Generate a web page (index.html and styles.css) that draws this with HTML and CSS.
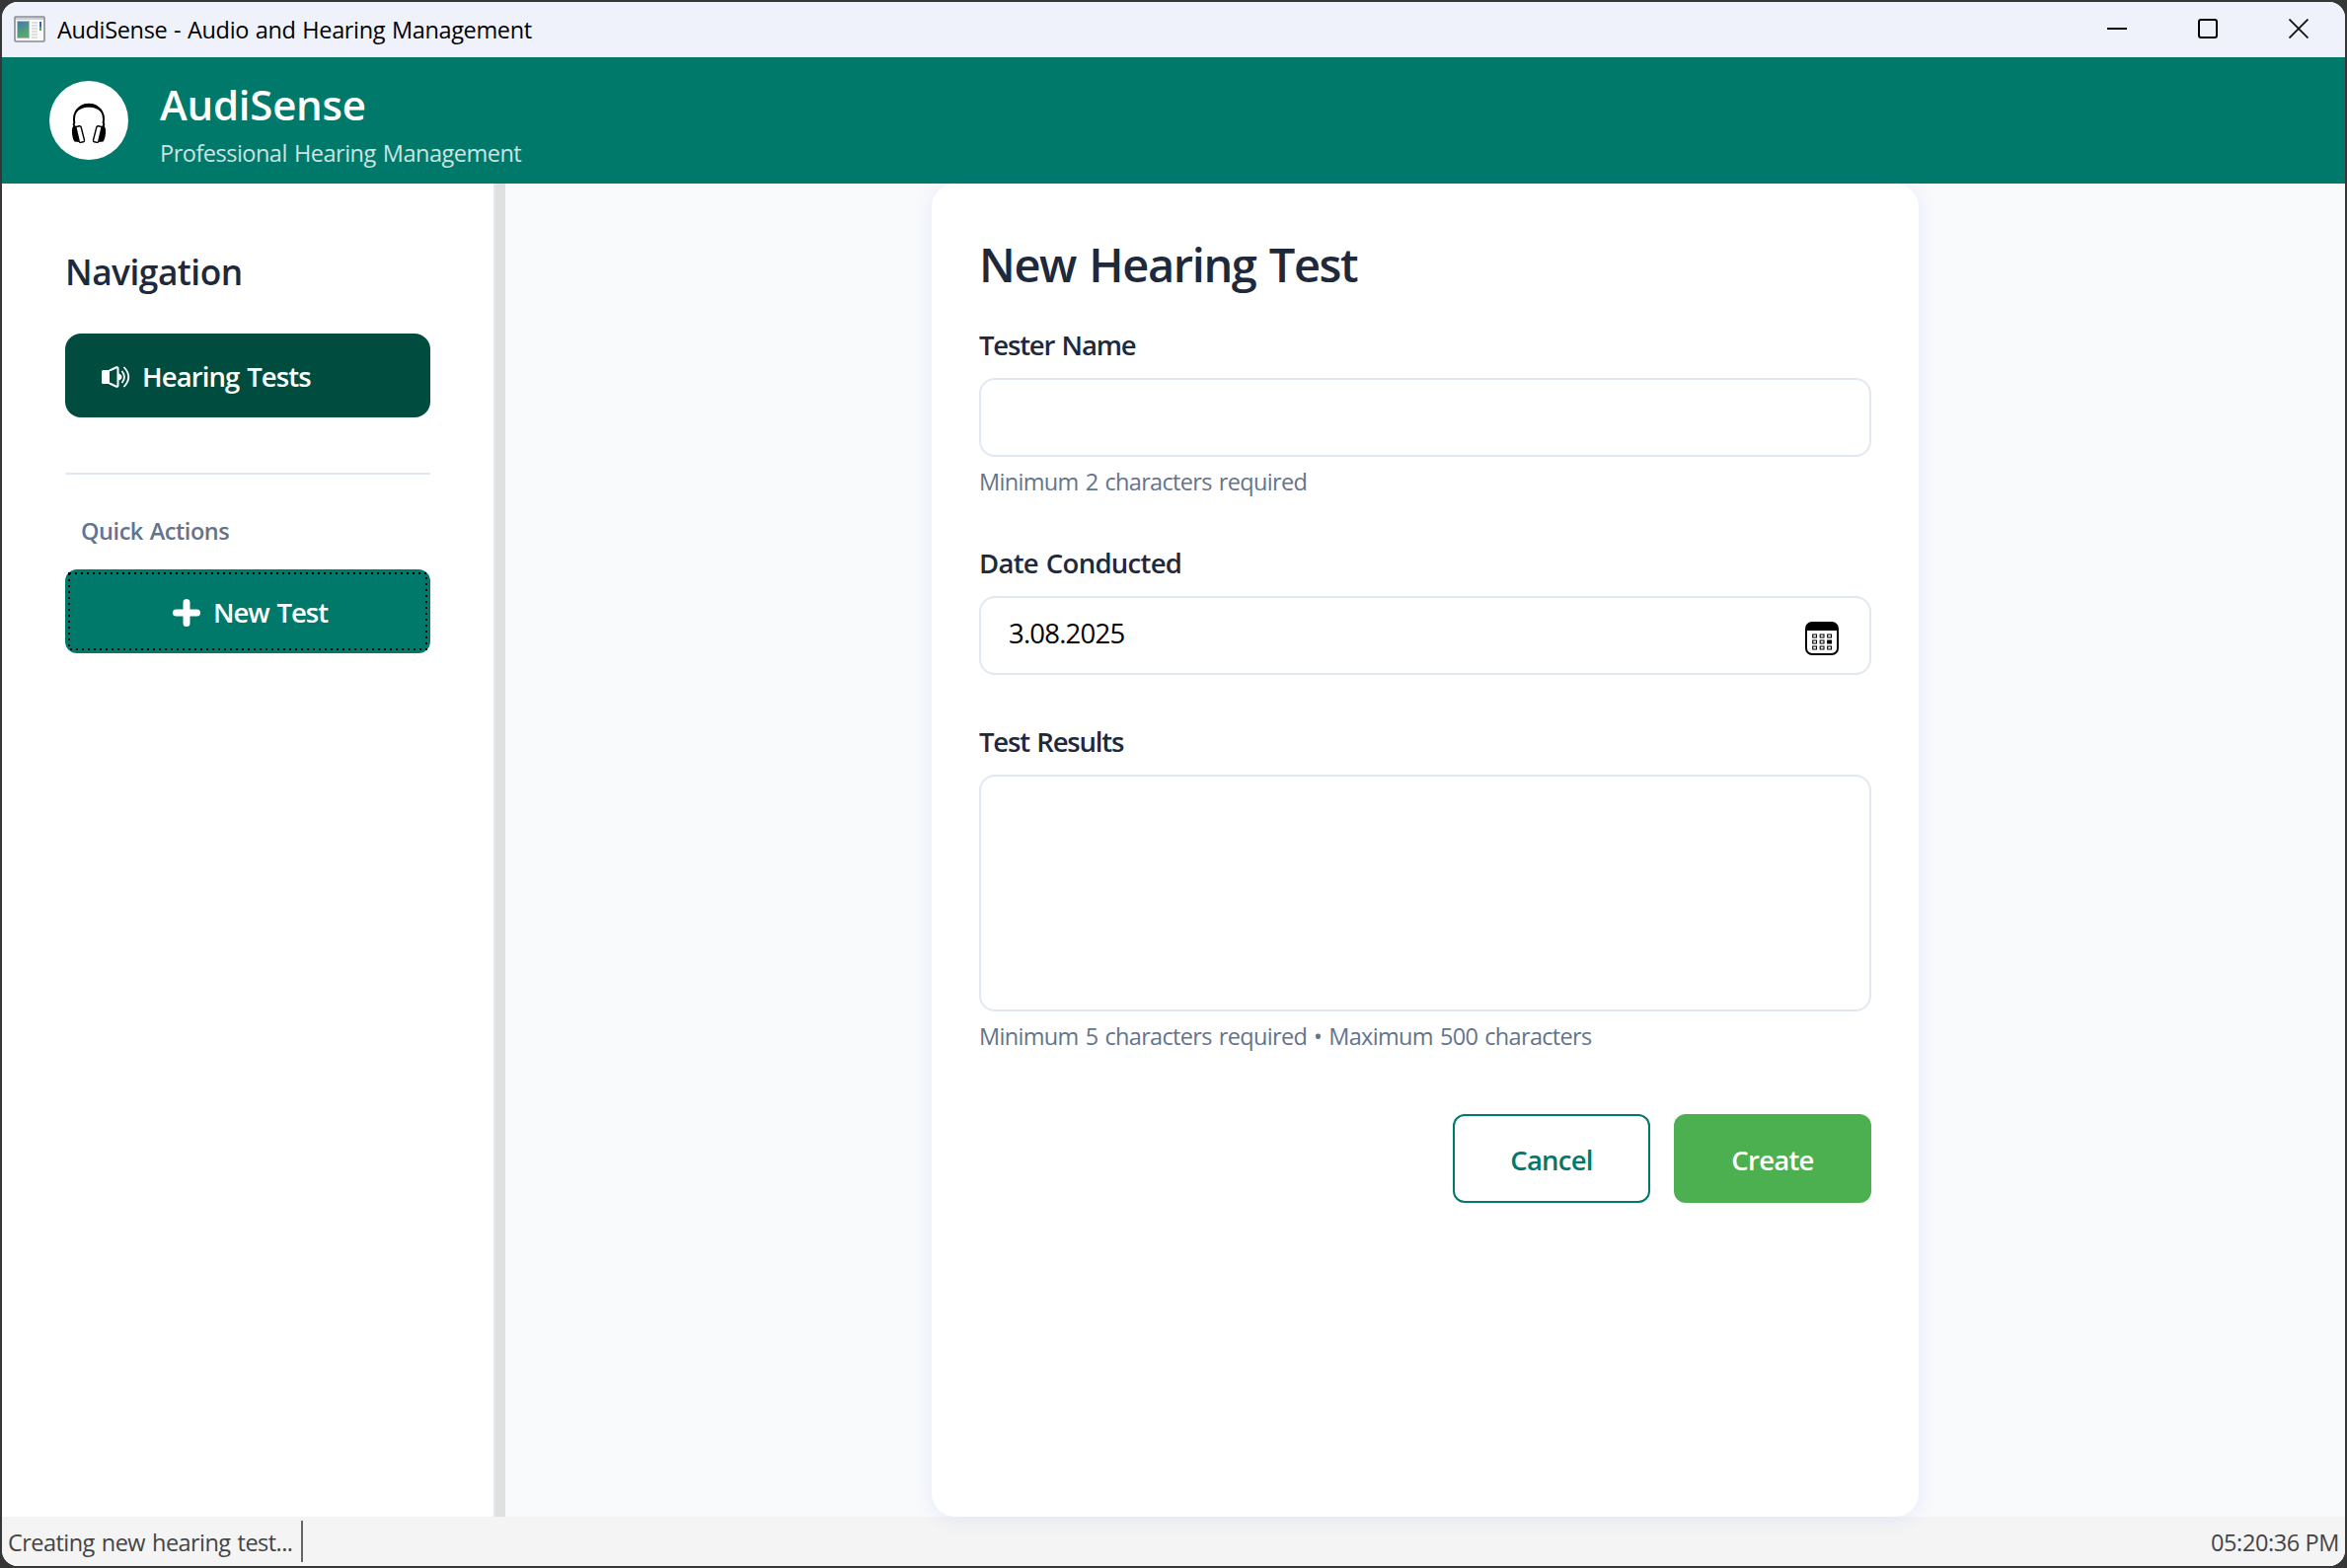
FILE: index.html
```html
<!DOCTYPE html>
<html lang="en">
<head>
<meta charset="utf-8">
<title>AudiSense - Audio and Hearing Management</title>
<link rel="stylesheet" href="styles.css">
</head>
<body>
<div class="window">
  <div class="titlebar">
    <svg class="app-icon" width="32" height="28" viewBox="0 0 32 28">
      <rect x="1" y="1" width="30" height="25" rx="1" fill="#fafafa" stroke="#868b91" stroke-width="1.6"/>
      <rect x="2" y="2" width="28" height="2" fill="#c9ced6"/>
      <rect x="3.5" y="5.5" width="12" height="17" fill="#fff" stroke="#b5bac0"/>
      <defs><linearGradient id="pane" x1="0" y1="0" x2="0.4" y2="1"><stop offset="0" stop-color="#4877ae"/><stop offset="1" stop-color="#55ad68"/></linearGradient></defs>
      <rect x="4" y="6" width="11" height="16" fill="url(#pane)"/>
      <path d="M18 7h6M18 10h6M18 13h6M18 16h6M18 19h6M18 22h6" stroke="#c4c4c4"/>
      <rect x="26" y="6" width="2" height="5" fill="#3c66a6"/><rect x="26" y="11" width="2" height="4" fill="#4fa35f"/>
    </svg>
    <span class="title-text">AudiSense - Audio and Hearing Management</span>
    <div class="controls">
      <svg width="20" height="20" viewBox="0 0 20 20"><path d="M0 10h20" stroke="#000" stroke-width="2"/></svg>
      <svg width="20" height="20" viewBox="0 0 20 20"><rect x="1" y="1" width="18" height="18" rx="2" fill="none" stroke="#000" stroke-width="2"/></svg>
      <svg width="20" height="20" viewBox="0 0 20 20"><path d="M.5 .5l19 19M19.5 .5l-19 19" stroke="#111" stroke-width="1.8"/></svg>
    </div>
  </div>
  <header class="header">
    <div class="logo">
      <svg width="36" height="42" viewBox="0 0 36 42">
        <path d="M4 24Q1.800 22.500 3.300 20.500C1.500 9 8 2.200 18 2.200S34.500 9 32.700 20.500Q34.200 22.500 32 24" fill="none" stroke="#000" stroke-width="2"/>
        <path d="M4.500 11C7 3.500 12 .8 18 .8S29 3.500 31.500 11C28 6.500 23.500 4.800 18 4.800S8 6.500 4.500 11Z"/>
        <path d="M3 23Q.5 25 1 31T3.500 39.500L8 40L5 24Z"/>
        <path d="M33 23Q35.500 25 35 31T32.500 39.500L28 40L31 24Z"/>
        <path d="M5 25.500Q4.800 24.600 6 24.300L8.500 23.800Q9.800 23.600 10.200 25L13.500 38Q13.800 39.400 12.500 39.800L9.500 40.400Q8.600 40.500 8.200 39.200Z" fill="#fff" stroke="#000" stroke-width="1.400"/>
        <path d="M31 25.500Q31.200 24.600 30 24.300L27.500 23.800Q26.200 23.600 25.800 25L22.500 38Q22.200 39.400 23.500 39.800L26.500 40.400Q27.400 40.500 27.800 39.200Z" fill="#fff" stroke="#000" stroke-width="1.400"/>
      </svg>
    </div>
    <div class="brand">
      <span class="brand-name">AudiSense</span>
      <span class="brand-sub">Professional Hearing Management</span>
    </div>
  </header>
  <div class="body">
    <aside class="sidebar">
      <h2 class="nav-title">Navigation</h2>
      <button class="nav-button">
        <svg width="30" height="24" viewBox="0 0 30 24">
          <path d="M1.500 5H8v14H1.500Q0 19 0 17.500V6.500Q0 5 1.500 5Z" fill="#fff"/>
          <path d="M8 5.500L15 2.300Q16.500 1.800 16.500 3.300V20.700Q16.500 22.200 15 21.700L8 18.500" fill="none" stroke="#fff" stroke-width="2"/>
          <path d="M17 8.500Q20.500 9.500 20.500 12T17 15.500Z" fill="#fff"/>
          <path d="M20.500 6Q25.500 12 20.500 18M22.500 2Q32 12 22.500 22" fill="none" stroke="#fff" stroke-width="1.800"/>
        </svg>
        <span>Hearing Tests</span>
      </button>
      <div class="divider"></div>
      <h3 class="quick-title">Quick Actions</h3>
      <button class="new-button">
        <svg class="focus" width="364" height="79"><rect x="1" y="1" width="362" height="77" fill="none" stroke="#000" stroke-width="2" stroke-dasharray="2 4"/></svg>
        <svg width="28" height="28" viewBox="0 0 28 28"><path d="M14 3.500v21M3.500 14h21" stroke="#fff" stroke-width="7" stroke-linecap="round"/></svg>
        <span>New Test</span>
      </button>
    </aside>
    <div class="splitter"></div>
    <main class="content">
      <form class="card">
        <h1 class="card-title">New Hearing Test</h1>
        <label class="label tester-label">Tester Name</label>
        <div class="field"></div>
        <p class="hint">Minimum 2 characters required</p>
        <label class="label">Date Conducted</label>
        <div class="field date">
          <span>3.08.2025</span>
          <svg width="34" height="34" viewBox="0 0 34 34">
            <rect x="1" y="1" width="32" height="32" rx="6" fill="#fff" stroke="#000" stroke-width="2"/>
            <path d="M1 9V7q0-6 6-6h20q6 0 6 6v2Z"/>
            <g fill="none" stroke="#000" stroke-width="1.100"><path d="M7.700 13h3.800v3H7.700zM15.200 13H19v3h-3.800zM22.700 13h3.800v3h-3.800zM7.700 19h3.800v3H7.700zM15.200 19H19v3h-3.800zM7.700 25h3.800v3H7.700zM15.200 25H19v3h-3.800zM22.700 25h3.800v3h-3.800z"/><path d="M22.700 19h3.800v3h-3.800z" fill="#000"/></g>
          </svg>
        </div>
        <label class="label results-label">Test Results</label>
        <div class="field area"></div>
        <p class="hint">Minimum 5 characters required • Maximum 500 characters</p>
        <div class="actions">
          <button type="button" class="btn cancel">Cancel</button>
          <button type="button" class="btn create">Create</button>
        </div>
      </form>
    </main>
  </div>
  <footer class="status">
    <span class="message">Creating new hearing test...</span>
    <div class="status-sep"></div>
    <span class="time">05:20:36 PM</span>
  </footer>
</div>
</body>
</html>
```
FILE: styles.css
```css
* { box-sizing: border-box; }
body {
  margin: 0;
  padding: 2px;
  width: 2378px;
  height: 1589px;
  overflow: hidden;
  background: #363636;
  font-family: "Open Sans", "Noto Sans", sans-serif;
  font-size: 23.5px;
  color: #1e293b;
}
h1, h2, h3, p { margin: 0; }
button { border: 0; font: inherit; }
svg { display: block; flex: none; }
span, h1, h2, h3, p, label { white-space: pre; }

.window { display: flex; flex-direction: column; height: 1585px; border-radius: 16px; overflow: hidden; background: #fff; }

.titlebar { display: flex; align-items: center; height: 56px; padding: 0 37px 0 12px; background: #eff2fa; color: #000; }
.title-text { margin-left: 12px; letter-spacing: -0.35px; word-spacing: 1px; }
.controls { display: flex; gap: 72px; margin-left: auto; padding-bottom: 2px; }

.header { display: flex; height: 128px; padding: 20px 48px 0; background: #00796b; color: #fff; }
.logo { display: flex; align-items: center; justify-content: center; width: 80px; height: 80px; margin-top: 4px; padding-top: 6px; border-radius: 50%; background: #fff; }
.brand { display: flex; flex-direction: column; gap: 4px; margin-left: 32px; }
.brand-name { height: 56px; line-height: 56px; font-size: 42px; font-weight: 600; letter-spacing: -0.25px; }
.brand-sub { height: 32px; line-height: 34px; color: #cce4e1; letter-spacing: -0.5px; word-spacing: 1.5px; }

.body { display: flex; height: 1351px; }
.sidebar { width: 500px; padding: 65px 64px 0; border-right: 2px solid #e2e8f0; background: #fff; }
.nav-title { height: 48px; line-height: 49px; font-size: 35.3px; font-weight: 600; letter-spacing: -0.5px; }
.nav-button, .new-button { display: flex; align-items: center; width: 370px; height: 85px; color: #fff; font-size: 27.5px; font-weight: 600; }
.nav-button { gap: 11px; margin-top: 39px; padding: 2px 36px 0 37px; border-radius: 16px; background: #004d40; letter-spacing: -0.9px; word-spacing: 1.5px; }
.divider { height: 2px; margin-top: 56px; background: #e2e8f0; }
.quick-title { height: 32px; margin: 41px 0 0 16px; line-height: 33px; font-size: 23.5px; font-weight: 600; color: #64748b; letter-spacing: -0.45px; word-spacing: 1.2px; }
.new-button { position: relative; justify-content: center; gap: 13px; margin-top: 23px; padding: 2px 0 0 5px; border-radius: 12px; background: #00796b; letter-spacing: -1px; word-spacing: 1.5px; }
.focus { position: absolute; left: 3px; top: 3px; }
.splitter { width: 10px; background: #e0e0e0; }

.content { display: flex; flex: 1; justify-content: center; background: #f8fafc; }
.card { position: relative; z-index: 1; width: 1000px; padding: 50px 48px 0; border-radius: 24px; background: #fff; box-shadow: 0 2px 20px rgba(70, 90, 255, 0.1); }
.card-title { height: 64px; margin-bottom: 30px; line-height: 65px; font-size: 47px; font-weight: 600; letter-spacing: -1.4px; word-spacing: 2.5px; }
.label { display: block; height: 38px; margin-bottom: 15px; line-height: 40px; font-size: 27.5px; font-weight: 600; letter-spacing: -0.72px; word-spacing: 1.5px; }
.tester-label, .results-label { letter-spacing: -1.2px; }
.field { height: 80px; border: 2px solid #e2e8f0; border-radius: 16px; background: #fff; }
.date { display: flex; align-items: center; justify-content: space-between; margin-bottom: 48px; padding: 0 31px 0 28px; font-size: 27.5px; color: #000; }
.date span { padding-bottom: 5px; letter-spacing: -0.8px; }
.date svg { margin-top: 6px; }
.area { height: 240px; }
.hint { height: 32px; margin: 9px 0 47px; line-height: 33px; color: #64748b; letter-spacing: -0.66px; word-spacing: 1.5px; }
.actions { display: flex; justify-content: flex-end; gap: 24px; margin-top: 63px; }
.btn { width: 200px; height: 90px; padding: 3px 0 0; border-radius: 12px; font-size: 27.5px; font-weight: 600; letter-spacing: -0.75px; }
.cancel { border: 2px solid #00796b; background: #fff; color: #00796b; }
.create { background: #4caf50; color: #fff; }

.status { display: flex; align-items: center; height: 50px; padding: 0 6px; background: #f4f4f4; color: #444; }
.message { padding-top: 2px; letter-spacing: -0.55px; word-spacing: 1.5px; }
.status-sep { width: 2px; height: 42px; margin-left: 9px; background: #666; }
.time { margin-left: auto; padding-top: 2px; letter-spacing: -0.4px; }
```
